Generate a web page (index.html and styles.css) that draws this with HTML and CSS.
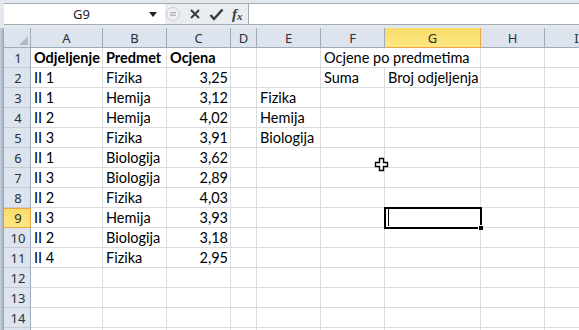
FILE: index.html
```html
<!DOCTYPE html>
<html lang="bs">
<head>
    <meta charset="UTF-8">
    <meta name="viewport" content="width=device-width, initial-scale=1.0">
    <title>Ocjene po predmetima</title>
    <link rel="stylesheet" href="styles.css">
</head>
<body>

    <div class="app">
        <!-- Formula bar -->
        <div class="formula-bar">
            <div class="name-box">
                <span class="name-value">G9</span>
                <svg class="drop" width="8" height="5" viewBox="0 0 8 5"><path d="M0 0h8L4 5z" fill="#222"/></svg>
            </div>
            <div class="fx-tools">
                <svg class="notch" width="16" height="20" viewBox="0 0 16 20">
                    <circle cx="8" cy="10" r="6.5" fill="#eef0f3" stroke="#c9ced5"/>
                    <rect x="5" y="8" width="6" height="1.3" fill="#a9aeb5"/>
                    <rect x="5" y="10.5" width="6" height="1.3" fill="#a9aeb5"/>
                </svg>
                <svg class="tool" width="12" height="12" viewBox="0 0 12 12">
                    <path d="M2 2l8 8M10 2l-8 8" stroke="#3a3a3a" stroke-width="2" fill="none"/>
                </svg>
                <svg class="tool" width="15" height="13" viewBox="0 0 15 13">
                    <path d="M1.5 7l3.5 4L13.5 1.5" stroke="#3a3a3a" stroke-width="2.4" fill="none"/>
                </svg>
                <span class="fx">f<sub>x</sub></span>
            </div>
            <div class="formula-input"></div>
        </div>

        <!-- Sheet -->
        <div class="sheet">
            <div class="frame-left"></div>
            <div class="grid">
                <div class="row head">
                    <div class="corner"><svg width="9" height="9" viewBox="0 0 9 9"><path d="M9 0v9H0z" fill="#b4bac3"/></svg></div>
                    <div class="col-h">A</div>
                    <div class="col-h">B</div>
                    <div class="col-h">C</div>
                    <div class="col-h">D</div>
                    <div class="col-h">E</div>
                    <div class="col-h">F</div>
                    <div class="col-h active">G</div>
                    <div class="col-h">H</div>
                    <div class="col-h">I</div>
                </div>
                <div class="row">
                    <div class="row-h">1</div>
                    <div class="cell bold">Odjeljenje</div>
                    <div class="cell bold">Predmet</div>
                    <div class="cell bold">Ocjena</div>
                    <div class="cell"></div>
                    <div class="cell"></div>
                    <div class="cell spill">Ocjene po predmetima</div>
                    <div class="cell"></div>
                    <div class="cell"></div>
                    <div class="cell"></div>
                </div>
                <div class="row">
                    <div class="row-h">2</div>
                    <div class="cell">II 1</div>
                    <div class="cell">Fizika</div>
                    <div class="cell num">3,25</div>
                    <div class="cell"></div>
                    <div class="cell"></div>
                    <div class="cell">Suma</div>
                    <div class="cell">Broj odjeljenja</div>
                    <div class="cell"></div>
                    <div class="cell"></div>
                </div>
                <div class="row">
                    <div class="row-h">3</div>
                    <div class="cell">II 1</div>
                    <div class="cell">Hemija</div>
                    <div class="cell num">3,12</div>
                    <div class="cell"></div>
                    <div class="cell">Fizika</div>
                    <div class="cell"></div>
                    <div class="cell"></div>
                    <div class="cell"></div>
                    <div class="cell"></div>
                </div>
                <div class="row">
                    <div class="row-h">4</div>
                    <div class="cell">II 2</div>
                    <div class="cell">Hemija</div>
                    <div class="cell num">4,02</div>
                    <div class="cell"></div>
                    <div class="cell">Hemija</div>
                    <div class="cell"></div>
                    <div class="cell"></div>
                    <div class="cell"></div>
                    <div class="cell"></div>
                </div>
                <div class="row">
                    <div class="row-h">5</div>
                    <div class="cell">II 3</div>
                    <div class="cell">Fizika</div>
                    <div class="cell num">3,91</div>
                    <div class="cell"></div>
                    <div class="cell">Biologija</div>
                    <div class="cell"></div>
                    <div class="cell"></div>
                    <div class="cell"></div>
                    <div class="cell"></div>
                </div>
                <div class="row">
                    <div class="row-h">6</div>
                    <div class="cell">II 1</div>
                    <div class="cell">Biologija</div>
                    <div class="cell num">3,62</div>
                    <div class="cell"></div>
                    <div class="cell"></div>
                    <div class="cell"></div>
                    <div class="cell"></div>
                    <div class="cell"></div>
                    <div class="cell"></div>
                </div>
                <div class="row">
                    <div class="row-h">7</div>
                    <div class="cell">II 3</div>
                    <div class="cell">Biologija</div>
                    <div class="cell num">2,89</div>
                    <div class="cell"></div>
                    <div class="cell"></div>
                    <div class="cell"></div>
                    <div class="cell"></div>
                    <div class="cell"></div>
                    <div class="cell"></div>
                </div>
                <div class="row">
                    <div class="row-h">8</div>
                    <div class="cell">II 2</div>
                    <div class="cell">Fizika</div>
                    <div class="cell num">4,03</div>
                    <div class="cell"></div>
                    <div class="cell"></div>
                    <div class="cell"></div>
                    <div class="cell"></div>
                    <div class="cell"></div>
                    <div class="cell"></div>
                </div>
                <div class="row">
                    <div class="row-h active">9</div>
                    <div class="cell">II 3</div>
                    <div class="cell">Hemija</div>
                    <div class="cell num">3,93</div>
                    <div class="cell"></div>
                    <div class="cell"></div>
                    <div class="cell"></div>
                    <div class="cell selected"><span class="caret"></span><span class="handle"></span></div>
                    <div class="cell"></div>
                    <div class="cell"></div>
                </div>
                <div class="row">
                    <div class="row-h">10</div>
                    <div class="cell">II 2</div>
                    <div class="cell">Biologija</div>
                    <div class="cell num">3,18</div>
                    <div class="cell"></div>
                    <div class="cell"></div>
                    <div class="cell"></div>
                    <div class="cell"></div>
                    <div class="cell"></div>
                    <div class="cell"></div>
                </div>
                <div class="row">
                    <div class="row-h">11</div>
                    <div class="cell">II 4</div>
                    <div class="cell">Fizika</div>
                    <div class="cell num">2,95</div>
                    <div class="cell"></div>
                    <div class="cell"></div>
                    <div class="cell"></div>
                    <div class="cell"></div>
                    <div class="cell"></div>
                    <div class="cell"></div>
                </div>
                <div class="row">
                    <div class="row-h">12</div>
                    <div class="cell"></div><div class="cell"></div><div class="cell"></div>
                    <div class="cell"></div><div class="cell"></div><div class="cell"></div>
                    <div class="cell"></div><div class="cell"></div><div class="cell"></div>
                </div>
                <div class="row">
                    <div class="row-h">13</div>
                    <div class="cell"></div><div class="cell"></div><div class="cell"></div>
                    <div class="cell"></div><div class="cell"></div><div class="cell"></div>
                    <div class="cell"></div><div class="cell"></div><div class="cell"></div>
                </div>
                <div class="row">
                    <div class="row-h">14</div>
                    <div class="cell"></div><div class="cell"></div><div class="cell"></div>
                    <div class="cell"></div><div class="cell"></div><div class="cell"></div>
                    <div class="cell"></div><div class="cell"></div><div class="cell"></div>
                </div>
                <div class="row">
                    <div class="row-h"></div>
                    <div class="cell"></div><div class="cell"></div><div class="cell"></div>
                    <div class="cell"></div><div class="cell"></div><div class="cell"></div>
                    <div class="cell"></div><div class="cell"></div><div class="cell"></div>
                </div>
            </div>
        </div>

        <!-- Mouse cursor over the sheet -->
        <svg class="mouse" width="15" height="15" viewBox="0 0 15 15">
            <path d="M5.5 1.5h4v4h4v4h-4v4h-4v-4h-4v-4h4z" fill="#fff" stroke="#000" stroke-width="1.4"/>
        </svg>
    </div>

</body>
</html>
```

FILE: styles.css
```css
* {
    margin: 0;
    padding: 0;
    box-sizing: border-box;
}

body {
    font-family: 'Lato', 'Noto Sans', sans-serif;
    background-color: #fff;
    width: 579px;
    height: 330px;
    overflow: hidden;
}

.app {
    position: relative;
    width: 579px;
    height: 330px;
    overflow: hidden;
    display: flex;
    flex-direction: column;
}

/* Formula bar */
.formula-bar {
    height: 28px;
    display: flex;
    background-color: #e3e8ee;
    padding: 3px 0 3px 4px;
}

.name-box {
    width: 161px;
    height: 22px;
    background-color: #fff;
    border-top: 1px solid #a5aab1;
    border-bottom: 1px solid #a5aab1;
    display: flex;
    align-items: center;
}

.name-value {
    flex: 1;
    text-align: center;
    font-family: 'Noto Sans', sans-serif;
    font-size: 13px;
    color: #1e1e1e;
    padding-left: 10px;
}

.drop {
    margin-right: 8px;
}

.fx-tools {
    width: 83px;
    height: 22px;
    display: flex;
    align-items: center;
    border-top: 1px solid #a5aab1;
    border-bottom: 1px solid #a5aab1;
    background-color: #e9ecf0;
}

.notch {
    margin-right: 8px;
}

.tool {
    margin-right: 8px;
}

.fx {
    font-family: 'Liberation Serif', serif;
    font-style: italic;
    font-weight: bold;
    font-size: 15px;
    color: #3a3a3a;
    line-height: 1;
}

.fx sub {
    font-size: 11px;
    vertical-align: baseline;
    position: relative;
    top: 1px;
}

.formula-input {
    flex: 1;
    height: 22px;
    background-color: #fff;
    border: 1px solid #a5aab1;
    border-right: none;
}

/* Sheet */
.sheet {
    flex: 1;
    display: flex;
    overflow: hidden;
}

.frame-left {
    width: 4px;
    flex-shrink: 0;
    background: linear-gradient(to right, #c4ccd8, #aebbcc 60%, #8e9cb0);
}

.grid {
    flex: 1;
    display: flex;
    flex-direction: column;
    overflow: hidden;
}

.row {
    display: grid;
    grid-template-columns: 27px 72px 64px 64px 26px 64px 64px 96px 64px 64px;
    height: 20px;
    flex-shrink: 0;
}

.corner,
.col-h,
.row-h {
    background-color: #dde4ee;
    border-right: 1px solid #9eabbd;
    border-bottom: 1px solid #9eabbd;
    font-family: 'Noto Sans', sans-serif;
    font-size: 13px;
    color: #27313d;
    display: flex;
    align-items: center;
    justify-content: center;
}

.corner {
    align-items: flex-end;
    justify-content: flex-end;
    padding: 0 2px 2px 0;
}

.row-h {
    border-bottom: 1px solid #c5ccd6;
    padding-left: 2px;
}

.col-h.active,
.row-h.active {
    background: linear-gradient(#f9dc6a, #ffe784);
    border-color: #f0a545;
    color: #2b2b2b;
}

.row-h.active {
    border-top: 1px solid #f0a545;
}

.cell {
    border-right: 1px solid #dadcdd;
    border-bottom: 1px solid #dadcdd;
    font-size: 14.5px;
    color: #000;
    padding: 0 2px 0 3px;
    line-height: 19px;
    white-space: nowrap;
    position: relative;
}

.cell.bold {
    font-weight: bold;
}

.cell.num {
    text-align: right;
}

.cell.spill {
    border-right-color: transparent;
    overflow: visible;
}

.cell.selected {
    outline: 2px solid #000;
    outline-offset: -1px;
    z-index: 1;
}

.caret {
    position: absolute;
    left: 3px;
    top: 1px;
    bottom: 1px;
    width: 1px;
    background-color: #000;
}

.handle {
    position: absolute;
    right: -3px;
    bottom: -3px;
    width: 5px;
    height: 5px;
    background-color: #000;
    border: 1px solid #fff;
    border-right: none;
    border-bottom: none;
}

/* Mouse pointer */
.mouse {
    position: absolute;
    left: 374px;
    top: 157px;
}
```
